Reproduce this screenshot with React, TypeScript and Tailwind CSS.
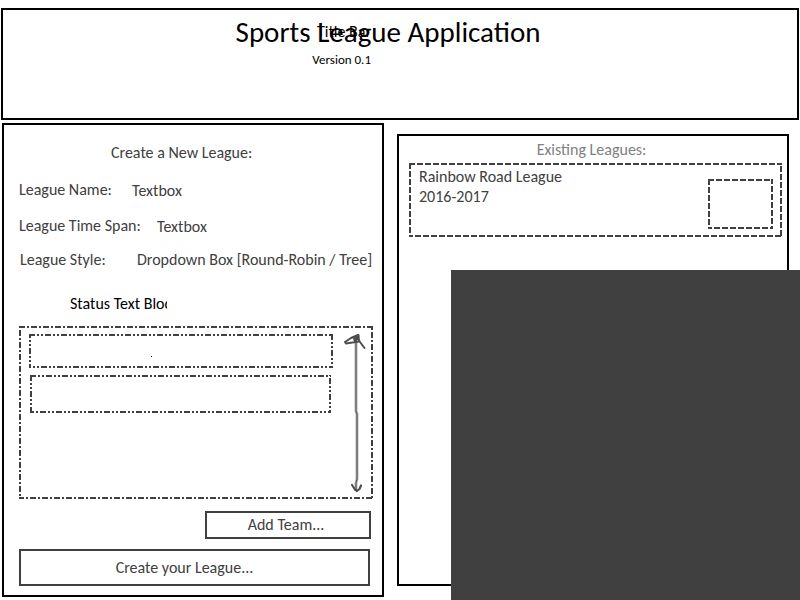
import type { ReactNode } from "react";

type Pattern = "dash" | "dashDot" | "dashDotDot";

const PATTERNS: Record<Pattern, string> = {
  dash: "6 2",
  dashDot: "6 2 2 2",
  dashDotDot: "6 2 2 2 2 2",
};

function Outlined({
  pattern,
  className,
  children,
}: {
  pattern: Pattern;
  className: string;
  children?: ReactNode;
}) {
  return (
    <div className={`relative ${className}`}>
      <svg className="pointer-events-none absolute inset-0 h-full w-full" aria-hidden="true">
        <rect
          width="100%"
          height="100%"
          fill="none"
          stroke="#404040"
          strokeWidth="4"
          strokeDasharray={PATTERNS[pattern]}
        />
      </svg>
      {children}
    </div>
  );
}

function ScrollArrow() {
  return (
    <svg
      className="h-40 w-6 shrink-0"
      viewBox="0 0 24 160"
      fill="none"
      stroke="#4d4d4d"
      strokeLinecap="round"
      strokeLinejoin="round"
      aria-hidden="true"
    >
      <path d="M13 5 L13 77 L14 80 L14 145 L13 149 L13 155" strokeWidth="3" stroke="#b8b8b8" />
      <path d="M13 5 L13 77 L14 80 L14 145 L13 149 L13 155" strokeWidth="1.4" stroke="#666666" />
      <path d="M15 1 L8 4 L2 8 L3 9.5 L16 7.5 L15.5 1 L11 4 L12 8 L14 3 L17 8 L21.5 14" strokeWidth="2" />
      <path d="M9 151 L12 155.5 L14 157 L16.5 155 L18 151.5" strokeWidth="2.2" />
    </svg>
  );
}

function CreateLeague() {
  return (
    <section className="mt-[3px] flex h-[474px] flex-col border-2 border-black pl-[15px] pr-[9px] pt-[18px]">
      <h2 className="pl-[92px]">Create a New League:</h2>
      <div className="mt-[17px] flex">
        <label htmlFor="league-name" className="w-[113px] whitespace-nowrap">
          League Name:
        </label>
        <input id="league-name" defaultValue="Textbox" className="mt-px h-5 min-w-0 flex-1 outline-none" />
      </div>
      <div className="mt-[15px] flex">
        <label htmlFor="league-span" className="w-[138px] whitespace-nowrap">
          League Time Span:
        </label>
        <input id="league-span" defaultValue="Textbox" className="mt-px h-5 min-w-0 flex-1 outline-none" />
      </div>
      <div className="mt-[13px] flex">
        <label htmlFor="league-style" className="w-[118px] whitespace-nowrap pl-px">
          League Style:
        </label>
        <select id="league-style" className="h-5 min-w-0 flex-1 appearance-none outline-none">
          <option>Dropdown Box [Round-Robin / Tree]</option>
        </select>
      </div>
      <p className="ml-[51px] mt-6 w-[97px] overflow-hidden whitespace-nowrap text-black">Status Text Block</p>

      <Outlined pattern="dashDot" className="mt-3 flex h-[173px] justify-between pl-2.5 pr-1.5 pt-2">
        <div className="flex w-[304px] flex-col gap-[7px]">
          <Outlined pattern="dashDotDot" className="h-[34px] pl-[122px] pt-[22px]">
            <div className="size-px bg-black" />
          </Outlined>
          <Outlined pattern="dashDotDot" className="ml-px mr-0.5 h-[38px]" />
        </div>
        <ScrollArrow />
      </Outlined>

      <button className="mr-0.5 mt-3 h-7 w-[166px] self-end border-2 border-[#404040] pr-1">Add Team...</button>
      <button className="mr-[3px] mt-2.5 h-[37px] border-2 border-[#404040] pr-5">Create your League...</button>
    </section>
  );
}

function ExistingLeagues() {
  return (
    <section className="mt-3.5 h-[452px] border-2 border-black pl-2.5 pr-[5px] pt-1">
      <h2 className="pr-2 text-center text-[#7f7f7f]">Existing Leagues:</h2>
      <Outlined pattern="dash" className="mt-[3px] flex h-[74px] justify-between pl-2.5 pr-[9px] pt-1">
        <div>
          <h3>Rainbow Road League</h3>
          <p>2016-2017</p>
        </div>
        <Outlined pattern="dash" className="mt-3 h-[50px] w-[65px]" />
      </Outlined>
    </section>
  );
}

export default function App() {
  return (
    <div className="relative min-h-screen overflow-hidden bg-white pt-2 font-['Carlito','Lato',sans-serif] text-base leading-5 text-[#404040]">
      <header className="relative mx-px h-28 border-2 border-black pt-1 text-black">
        <h1 className="pr-6 text-center text-[29px] leading-9">Sports League Application</h1>
        <div className="absolute left-0 top-3 w-[368px] text-right">Title Bar</div>
        <p className="mt-0.5 w-[368px] text-right text-[13px] leading-4">Version 0.1</p>
      </header>
      <main className="ml-0.5 mr-[11px] grid grid-cols-[382fr_392fr] gap-[13px] pb-[3px]">
        <CreateLeague />
        <ExistingLeagues />
      </main>
      <div className="absolute bottom-0 left-[451px] right-0 top-[270px] bg-[#404040]" />
    </div>
  );
}
